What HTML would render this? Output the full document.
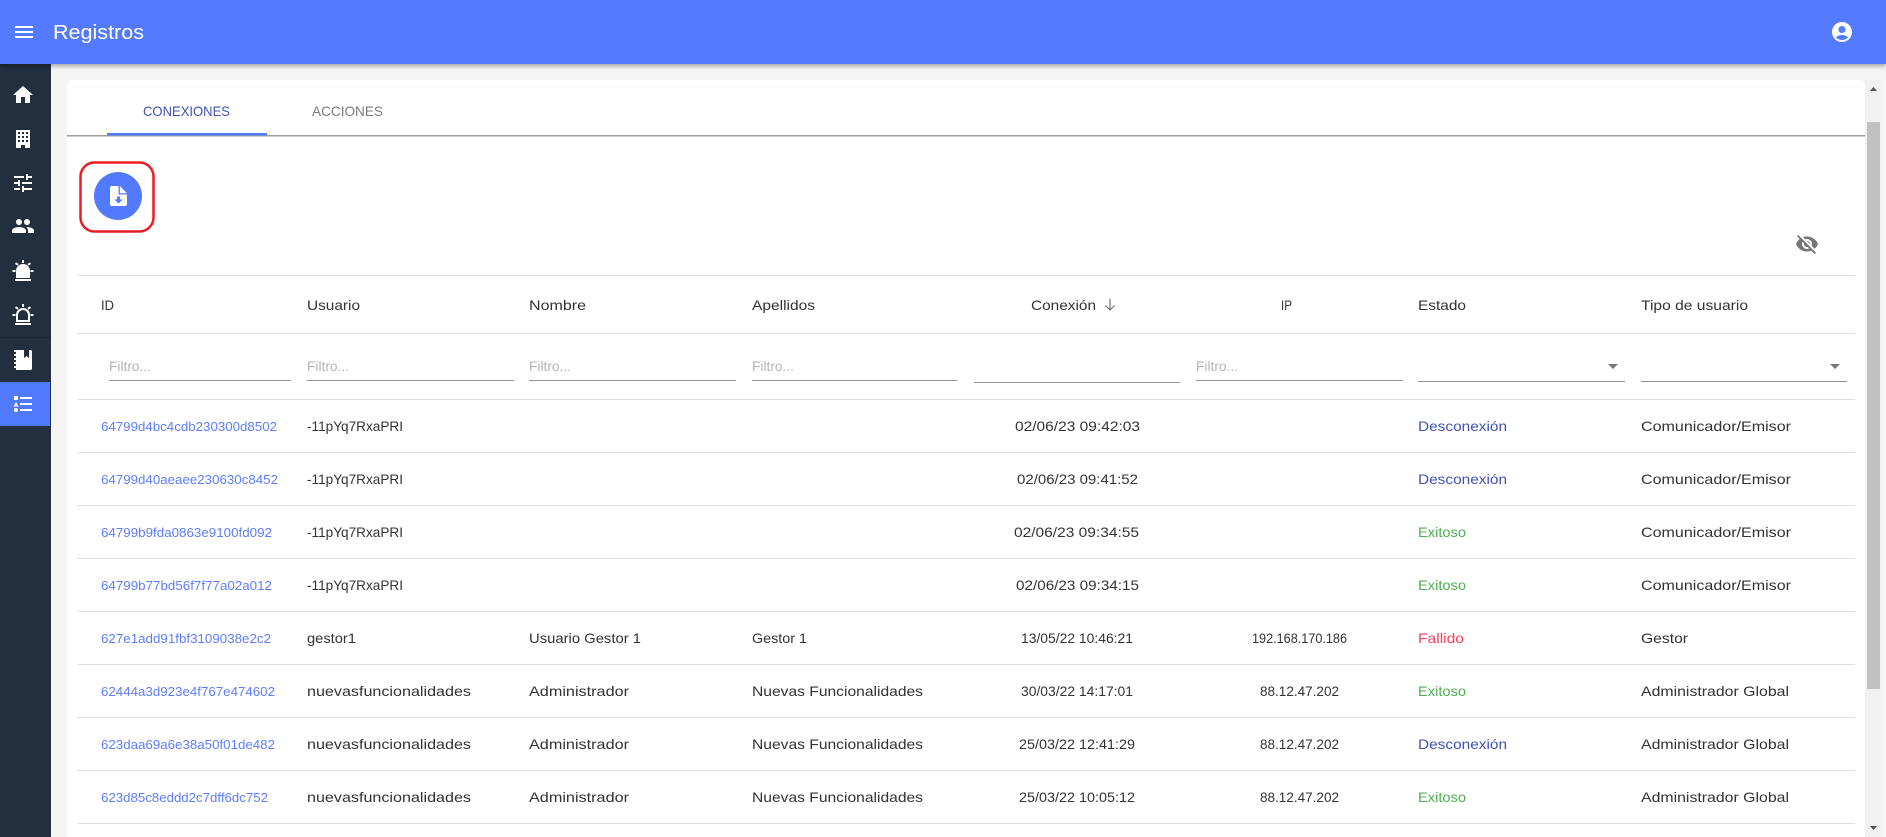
<!DOCTYPE html>
<html lang="es">
<head>
<meta charset="utf-8">
<title>Registros</title>
<style>
html,body{margin:0;padding:0;width:1886px;height:837px;overflow:hidden;background:#f5f5f5;font-family:"Liberation Sans",sans-serif}
svg{position:absolute;left:0;top:0;display:block}
text{font-family:"Liberation Sans",sans-serif;font-size:14px;fill:#333}
.id{fill:#5d7dff;font-size:13px}
.h{fill:#333;font-size:14px}
.f{fill:#b5b5b5;font-size:14px}
.d{fill:#3f51b5}
.e{fill:#4caf50}
.x{fill:#ff3d5a}
</style>
</head>
<body>
<svg width="1886" height="837" viewBox="0 0 1886 837" xmlns="http://www.w3.org/2000/svg">
<defs>
<filter id="sh" x="-5%" y="-20%" width="110%" height="160%"><feDropShadow dx="0" dy="2" stdDeviation="2.5" flood-color="#000" flood-opacity=".35"/></filter>
</defs>
<rect width="1886" height="837" fill="#f5f5f5"/>

<!-- card -->
<rect x="67" y="80" width="1798" height="770" rx="6" fill="#fff"/>
<rect x="70" y="87" width="1792" height="1" fill="#fafafa"/>

<!-- scrollbar -->
<rect x="1865" y="80" width="17" height="757" fill="#f1f1f1"/>
<rect x="1867" y="122" width="13" height="567" fill="#c1c1c1"/>
<path d="M1870 91l3.5-4 3.500 4z" fill="#505050"/>
<path d="M1870 826l3.5 4 3.500-4z" fill="#505050"/>

<!-- tabs -->
<rect x="67" y="135" width="1798" height="1.5" fill="#9e9e9e"/>
<rect x="107" y="133" width="160" height="2.5" fill="#527aff"/>
<text lengthAdjust="spacingAndGlyphs" x="143" y="116" textLength="87" style="font-size:14px;fill:#3f51b5">CONEXIONES</text>
<text lengthAdjust="spacingAndGlyphs" x="312" y="116" textLength="71" style="font-size:14px;fill:#7b7b7b">ACCIONES</text>

<!-- export button -->
<rect x="80.5" y="162.5" width="73" height="69" rx="14" fill="none" stroke="#ed1c24" stroke-width="2.5"/>
<circle cx="118" cy="196" r="24" fill="#527aff"/>
<path d="M112 186h6.500v8.500h8.500v9.500a2 2 0 0 1-2 2h-13a2 2 0 0 1-2-2v-16a2 2 0 0 1 2-2z" fill="#fff"/>
<path d="M119.800 186l7.200 7.200h-7.200z" fill="#fff"/>
<path d="M117 196.500h3v3h2.600l-4.100 4-4.100-4h2.600z" fill="#527aff"/>

<!-- column toggle -->
<g transform="translate(1795,232)"><path fill="#757575" d="M12 7c2.76 0 5 2.24 5 5 0 .65-.13 1.26-.36 1.83l2.92 2.92c1.51-1.26 2.7-2.89 3.43-4.75-1.73-4.39-6-7.5-11-7.5-1.4 0-2.74.25-3.98.7l2.16 2.16C10.74 7.13 11.35 7 12 7zM2 4.27l2.28 2.28.46.46C3.08 8.3 1.78 10.02 1 12c1.73 4.39 6 7.5 11 7.5 1.55 0 3.03-.3 4.38-.84l.42.42L19.73 22 21 20.73 3.27 3 2 4.27zM7.53 9.8l1.55 1.55c-.05.21-.08.43-.08.65 0 1.66 1.34 3 3 3 .22 0 .44-.03.65-.08l1.55 1.55c-.67.33-1.41.53-2.2.53-2.76 0-5-2.24-5-5 0-.79.2-1.53.53-2.2zm4.31-.78l3.15 3.15.02-.16c0-1.66-1.34-3-3-3l-.17.01z"/></g>

<!-- table lines -->
<g fill="#e0e0e0">
<rect x="77" y="275" width="1778" height="1"/>
<rect x="77" y="333" width="1778" height="1"/>
<rect x="77" y="399" width="1778" height="1"/>
<rect x="77" y="452" width="1778" height="1"/>
<rect x="77" y="505" width="1778" height="1"/>
<rect x="77" y="558" width="1778" height="1"/>
<rect x="77" y="611" width="1778" height="1"/>
<rect x="77" y="664" width="1778" height="1"/>
<rect x="77" y="717" width="1778" height="1"/>
<rect x="77" y="770" width="1778" height="1"/>
<rect x="77" y="823" width="1778" height="1"/>
</g>

<!-- table head -->
<text lengthAdjust="spacingAndGlyphs" class="h" x="101" y="310" textLength="13">ID</text>
<text lengthAdjust="spacingAndGlyphs" class="h" x="307" y="310" textLength="53">Usuario</text>
<text lengthAdjust="spacingAndGlyphs" class="h" x="529" y="310" textLength="57">Nombre</text>
<text lengthAdjust="spacingAndGlyphs" class="h" x="752" y="310" textLength="63">Apellidos</text>
<text lengthAdjust="spacingAndGlyphs" class="h" x="1031" y="310" textLength="65">Conexión</text>
<path d="M1110 299v11M1105.500 305.500l4.500 4.500 4.500-4.500" fill="none" stroke="#757575" stroke-width="1.2"/>
<text lengthAdjust="spacingAndGlyphs" class="h" x="1281" y="310" textLength="11">IP</text>
<text lengthAdjust="spacingAndGlyphs" class="h" x="1418" y="310" textLength="48">Estado</text>
<text lengthAdjust="spacingAndGlyphs" class="h" x="1641" y="310" textLength="107">Tipo de usuario</text>

<!-- filters -->
<text lengthAdjust="spacingAndGlyphs" class="f" x="109" y="371" textLength="42">Filtro...</text>
<text lengthAdjust="spacingAndGlyphs" class="f" x="307" y="371" textLength="42">Filtro...</text>
<text lengthAdjust="spacingAndGlyphs" class="f" x="529" y="371" textLength="42">Filtro...</text>
<text lengthAdjust="spacingAndGlyphs" class="f" x="752" y="371" textLength="42">Filtro...</text>
<text lengthAdjust="spacingAndGlyphs" class="f" x="1196" y="371" textLength="42">Filtro...</text>
<g fill="#949494">
<rect x="109" y="380" width="182" height="1"/>
<rect x="307" y="380" width="207" height="1"/>
<rect x="529" y="380" width="207" height="1"/>
<rect x="752" y="380" width="205" height="1"/>
<rect x="974" y="382" width="206" height="1"/>
<rect x="1196" y="380" width="207" height="1"/>
<rect x="1418" y="381" width="207" height="1"/>
<rect x="1641" y="381" width="206" height="1"/>
</g>
<path d="M1608 364h10l-5 5z" fill="#757575"/>
<path d="M1830 364h10l-5 5z" fill="#757575"/>

<!-- row 1 -->
<text lengthAdjust="spacingAndGlyphs" class="id" x="101" y="431" textLength="176">64799d4bc4cdb230300d8502</text>
<text lengthAdjust="spacingAndGlyphs" x="307" y="431" textLength="96">-11pYq7RxaPRI</text>
<text lengthAdjust="spacingAndGlyphs" x="1015" y="431" textLength="125">02/06/23 09:42:03</text>
<text lengthAdjust="spacingAndGlyphs" class="d" x="1418" y="431" textLength="89">Desconexión</text>
<text lengthAdjust="spacingAndGlyphs" x="1641" y="431" textLength="150">Comunicador/Emisor</text>
<!-- row 2 -->
<text lengthAdjust="spacingAndGlyphs" class="id" x="101" y="484" textLength="177">64799d40aeaee230630c8452</text>
<text lengthAdjust="spacingAndGlyphs" x="307" y="484" textLength="96">-11pYq7RxaPRI</text>
<text lengthAdjust="spacingAndGlyphs" x="1017" y="484" textLength="121">02/06/23 09:41:52</text>
<text lengthAdjust="spacingAndGlyphs" class="d" x="1418" y="484" textLength="89">Desconexión</text>
<text lengthAdjust="spacingAndGlyphs" x="1641" y="484" textLength="150">Comunicador/Emisor</text>
<!-- row 3 -->
<text lengthAdjust="spacingAndGlyphs" class="id" x="101" y="537" textLength="171">64799b9fda0863e9100fd092</text>
<text lengthAdjust="spacingAndGlyphs" x="307" y="537" textLength="96">-11pYq7RxaPRI</text>
<text lengthAdjust="spacingAndGlyphs" x="1014" y="537" textLength="125">02/06/23 09:34:55</text>
<text lengthAdjust="spacingAndGlyphs" class="e" x="1418" y="537" textLength="48">Exitoso</text>
<text lengthAdjust="spacingAndGlyphs" x="1641" y="537" textLength="150">Comunicador/Emisor</text>
<!-- row 4 -->
<text lengthAdjust="spacingAndGlyphs" class="id" x="101" y="590" textLength="171">64799b77bd56f7f77a02a012</text>
<text lengthAdjust="spacingAndGlyphs" x="307" y="590" textLength="96">-11pYq7RxaPRI</text>
<text lengthAdjust="spacingAndGlyphs" x="1016" y="590" textLength="123">02/06/23 09:34:15</text>
<text lengthAdjust="spacingAndGlyphs" class="e" x="1418" y="590" textLength="48">Exitoso</text>
<text lengthAdjust="spacingAndGlyphs" x="1641" y="590" textLength="150">Comunicador/Emisor</text>
<!-- row 5 -->
<text lengthAdjust="spacingAndGlyphs" class="id" x="101" y="643" textLength="170">627e1add91fbf3109038e2c2</text>
<text lengthAdjust="spacingAndGlyphs" x="307" y="643" textLength="49">gestor1</text>
<text lengthAdjust="spacingAndGlyphs" x="529" y="643" textLength="112">Usuario Gestor 1</text>
<text lengthAdjust="spacingAndGlyphs" x="752" y="643" textLength="55">Gestor 1</text>
<text lengthAdjust="spacingAndGlyphs" x="1021" y="643" textLength="112">13/05/22 10:46:21</text>
<text lengthAdjust="spacingAndGlyphs" x="1252" y="643" textLength="95">192.168.170.186</text>
<text lengthAdjust="spacingAndGlyphs" class="x" x="1418" y="643" textLength="46">Fallido</text>
<text lengthAdjust="spacingAndGlyphs" x="1641" y="643" textLength="47">Gestor</text>
<!-- row 6 -->
<text lengthAdjust="spacingAndGlyphs" class="id" x="101" y="696" textLength="174">62444a3d923e4f767e474602</text>
<text lengthAdjust="spacingAndGlyphs" x="307" y="696" textLength="164">nuevasfuncionalidades</text>
<text lengthAdjust="spacingAndGlyphs" x="529" y="696" textLength="100">Administrador</text>
<text lengthAdjust="spacingAndGlyphs" x="752" y="696" textLength="171">Nuevas Funcionalidades</text>
<text lengthAdjust="spacingAndGlyphs" x="1021" y="696" textLength="112">30/03/22 14:17:01</text>
<text lengthAdjust="spacingAndGlyphs" x="1260" y="696" textLength="79">88.12.47.202</text>
<text lengthAdjust="spacingAndGlyphs" class="e" x="1418" y="696" textLength="48">Exitoso</text>
<text lengthAdjust="spacingAndGlyphs" x="1641" y="696" textLength="148">Administrador Global</text>
<!-- row 7 -->
<text lengthAdjust="spacingAndGlyphs" class="id" x="101" y="749" textLength="174">623daa69a6e38a50f01de482</text>
<text lengthAdjust="spacingAndGlyphs" x="307" y="749" textLength="164">nuevasfuncionalidades</text>
<text lengthAdjust="spacingAndGlyphs" x="529" y="749" textLength="100">Administrador</text>
<text lengthAdjust="spacingAndGlyphs" x="752" y="749" textLength="171">Nuevas Funcionalidades</text>
<text lengthAdjust="spacingAndGlyphs" x="1019" y="749" textLength="116">25/03/22 12:41:29</text>
<text lengthAdjust="spacingAndGlyphs" x="1260" y="749" textLength="79">88.12.47.202</text>
<text lengthAdjust="spacingAndGlyphs" class="d" x="1418" y="749" textLength="89">Desconexión</text>
<text lengthAdjust="spacingAndGlyphs" x="1641" y="749" textLength="148">Administrador Global</text>
<!-- row 8 -->
<text lengthAdjust="spacingAndGlyphs" class="id" x="101" y="802" textLength="167">623d85c8eddd2c7dff6dc752</text>
<text lengthAdjust="spacingAndGlyphs" x="307" y="802" textLength="164">nuevasfuncionalidades</text>
<text lengthAdjust="spacingAndGlyphs" x="529" y="802" textLength="100">Administrador</text>
<text lengthAdjust="spacingAndGlyphs" x="752" y="802" textLength="171">Nuevas Funcionalidades</text>
<text lengthAdjust="spacingAndGlyphs" x="1019" y="802" textLength="116">25/03/22 10:05:12</text>
<text lengthAdjust="spacingAndGlyphs" x="1260" y="802" textLength="79">88.12.47.202</text>
<text lengthAdjust="spacingAndGlyphs" class="e" x="1418" y="802" textLength="48">Exitoso</text>
<text lengthAdjust="spacingAndGlyphs" x="1641" y="802" textLength="148">Administrador Global</text>

<!-- sidebar -->
<rect x="0" y="64" width="51" height="773" fill="#232f3e"/>
<rect x="0" y="337" width="51" height="1" fill="#1c2632"/>
<rect x="0" y="382" width="50" height="44" fill="#527aff"/>

<g transform="translate(11,83)"><path fill="#fff" d="M10 20v-6h4v6h5v-8h3L12 3 2 12h3v8z"/></g>
<!-- building -->
<path fill="#fff" fill-rule="evenodd" d="M16 130h14v18h-5v-3h-4v3h-5zM18 132v2h2v-2zM22 132v2h2v-2zM26 132v2h2v-2zM18 136v2h2v-2zM22 136v2h2v-2zM26 136v2h2v-2zM18 140v2h2v-2zM22 140v2h2v-2zM26 140v2h2v-2z"/>
<g transform="translate(11,171)"><path fill="#fff" d="M3 17v2h6v-2H3zM3 5v2h10V5H3zm10 16v-2h8v-2h-8v-2h-2v6h2zM7 9v2H3v2h4v2h2V9H7zm14 4v-2H11v2h10zm-6-4h2V7h4V5h-4V3h-2v6z"/></g>
<g transform="translate(11,214)"><path fill="#fff" d="M16 11c1.66 0 2.99-1.34 2.99-3S17.66 5 16 5c-1.66 0-3 1.34-3 3s1.34 3 3 3zm-8 0c1.66 0 2.99-1.34 2.99-3S9.66 5 8 5C6.34 5 5 6.34 5 8s1.34 3 3 3zm0 2c-2.33 0-7 1.17-7 3.5V19h14v-2.5c0-2.33-4.67-3.5-7-3.5zm8 0c-.29 0-.62.02-.97.05 1.16.84 1.97 1.97 1.97 3.45V19h6v-2.5c0-2.33-4.67-3.5-7-3.5z"/></g>
<!-- alarm filled -->
<g fill="#fff">
<path d="M16 278v-7a7 7 0 0 1 14 0v7z"/>
<rect x="15" y="279" width="16" height="2"/>
<rect x="22" y="260" width="2" height="3"/>
<rect x="12.500" y="270" width="3" height="2"/>
<rect x="30.500" y="270" width="3" height="2"/>
<path d="M15 264l1-1.600 2.600 1.600-1 1.600zM31 264l-1-1.600-2.600 1.600 1 1.600z"/>
</g>
<!-- alarm outline -->
<g fill="#fff">
<path fill-rule="evenodd" d="M16 322v-7a7 7 0 0 1 14 0v7zM18 320h10v-5a5 5 0 0 0-10 0z"/>
<rect x="15" y="323" width="16" height="2"/>
<rect x="22" y="304" width="2" height="3"/>
<rect x="12.500" y="314" width="3" height="2"/>
<rect x="30.500" y="314" width="3" height="2"/>
<path d="M15 308l1-1.600 2.600 1.600-1 1.600zM31 308l-1-1.600-2.600 1.600 1 1.600z"/>
</g>
<!-- book -->
<path fill="#fff" d="M16 350h8v8l2.500-2 2.500 2v-8h1.500a1.500 1.500 0 0 1 1.500 1.500v17a1.500 1.500 0 0 1-1.500 1.500H16v-2h-2v-2h2v-2h-2v-2h2v-2h-2v-2h2v-2h-2v-2h2v-2h-2v-2h2z"/>
<!-- list -->
<g fill="#fff">
<rect x="14" y="396" width="4" height="4"/>
<path d="M16 402l2.500 4.500h-5z"/>
<circle cx="16" cy="410" r="2"/>
<rect x="20" y="397" width="12" height="2"/>
<rect x="20" y="403" width="12" height="2"/>
<rect x="20" y="409" width="12" height="2"/>
</g>

<!-- app bar -->
<rect x="0" y="0" width="1886" height="64" fill="#527aff" filter="url(#sh)"/>
<g fill="#fff">
<rect x="15" y="26" width="18" height="2"/>
<rect x="15" y="31" width="18" height="2"/>
<rect x="15" y="36" width="18" height="2"/>
</g>
<text lengthAdjust="spacingAndGlyphs" x="53" y="39" textLength="91" style="font-size:20px;fill:#fff">Registros</text>
<g transform="translate(1830,20)"><path fill="#fff" d="M12 2C6.48 2 2 6.48 2 12s4.48 10 10 10 10-4.48 10-10S17.52 2 12 2zm0 4c1.93 0 3.5 1.57 3.5 3.5S13.930 13 12 13s-3.500-1.570-3.500-3.500S10.070 6 12 6zm0 14c-2.030 0-4.430-.820-6.140-2.880C7.550 15.800 9.680 15 12 15s4.450.800 6.140 2.120C16.430 19.180 14.030 20 12 20z"/></g>
</svg>
</body>
</html>
